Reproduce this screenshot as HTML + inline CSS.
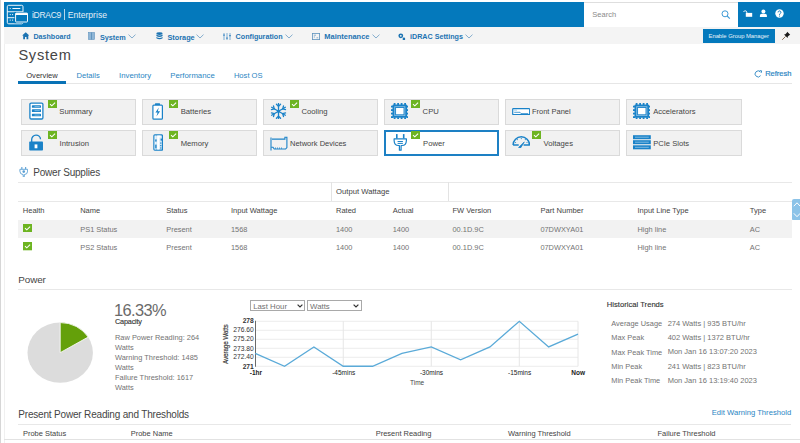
<!DOCTYPE html>
<html><head><meta charset="utf-8"><style>
html,body{margin:0;padding:0;background:#fff;width:800px;height:443px;overflow:hidden;position:relative}
body{font-family:"Liberation Sans", sans-serif}
.t{position:absolute;white-space:nowrap;line-height:1}
.r{position:absolute;box-sizing:border-box}
</style></head><body>
<div class="r" style="left:0px;top:0px;width:1px;height:443px;background:#d6d6d6"></div>
<div class="r" style="left:4px;top:44px;width:1px;height:400px;background:#f0f0f0"></div>
<div class="r" style="left:4px;top:1.6px;width:796px;height:25.1px;background:#0479bc"></div>
<svg class="r" style="left:4px;top:2px" width="28" height="24" viewBox="0 0 28 24">
<g fill="none" stroke="#fff" stroke-width="0.95">
<rect x="3.3" y="3.3" width="15.7" height="18.5" rx="1.4"/>
<path d="M3.3 9.75 H19 M3.3 15.7 H19 M8.4 6.5 H16.3"/>
</g>
<g fill="#fff"><circle cx="6.2" cy="6.5" r="0.6"/><circle cx="6.2" cy="12.6" r="0.6"/><circle cx="8.6" cy="12.6" r="0.6"/><circle cx="6.2" cy="18.1" r="0.6"/><circle cx="8.6" cy="18.1" r="0.6"/></g>
<rect x="10.4" y="9.9" width="14.3" height="11.3" fill="#0479bc"/>
<rect x="11.6" y="11.1" width="11.9" height="8.9" rx="0.6" fill="none" stroke="#fff" stroke-width="0.95"/>
<rect x="11.6" y="11.1" width="11.9" height="1.9" fill="#fff"/>
</svg>
<div class="t" style="left:32.00px;top:10.80px;font-size:8.5px;color:#e4eff7;letter-spacing:-0.28px;">iDRAC9</div>
<div class="r" style="left:64.3px;top:9px;width:0.8px;height:11px;background:rgba(255,255,255,0.7)"></div>
<div class="t" style="left:67.80px;top:10.72px;font-size:8.6px;color:#e4eff7;">Enterprise</div>
<div class="r" style="left:584px;top:2px;width:153.5px;height:24.7px;background:#fff"></div>
<div class="r" style="left:584px;top:1.6px;width:153.5px;height:1px;background:#dedede"></div>
<div class="t" style="left:592.30px;top:11.35px;font-size:7.5px;color:#8a8a8a;">Search</div>
<svg class="r" style="left:721px;top:10px" width="10" height="9" viewBox="0 0 10 9"><circle cx="4" cy="3.8" r="3" fill="none" stroke="#3d9ad6" stroke-width="1"/><path d="M6.2 6 L8.8 8.6" stroke="#3d9ad6" stroke-width="1.1"/></svg>
<svg class="r" style="left:742px;top:9px" width="12" height="10" viewBox="0 0 12 10"><path d="M1.6 2.8 a1.7 1.7 0 0 1 3.2 0.4 V4.4" fill="none" stroke="#fff" stroke-width="1"/><rect x="3.8" y="3.9" width="6.4" height="3.9" fill="#fff"/></svg>
<svg class="r" style="left:759.3px;top:9px" width="9" height="9" viewBox="0 0 9 9"><circle cx="4.4" cy="2.5" r="2" fill="#fff"/><path d="M0.9 8 V6.6 a1.9 1.9 0 0 1 1.9 -1.9 H6 a1.9 1.9 0 0 1 1.9 1.9 V8 Z" fill="#fff"/></svg>
<svg class="r" style="left:775.1px;top:9.2px" width="9" height="9" viewBox="0 0 9 9"><circle cx="4.5" cy="4.5" r="4.2" fill="#fff"/><path d="M3.1 3.4 a1.4 1.4 0 1 1 2.2 1.1 c-0.6 0.4 -0.8 0.6 -0.8 1.3" fill="none" stroke="#0a76bb" stroke-width="1"/><circle cx="4.5" cy="7" r="0.55" fill="#0a76bb"/></svg>
<div class="r" style="left:4px;top:26.8px;width:796px;height:17.6px;background:#f4f4f4"></div>
<svg class="r" style="left:21.5px;top:32.3px" width="7.5" height="7.3" viewBox="0 0 7.5 7.3"><path d="M3.75 0.2 L7.4 3.6 H6.3 V7.2 H4.5 V5 H3 V7.2 H1.2 V3.6 H0.1 Z" fill="#1c73b2"/></svg>
<div class="t" style="left:33.50px;top:33.69px;font-size:7.1px;color:#1c73b2;font-weight:700;">Dashboard</div>
<svg class="r" style="left:88px;top:32px" width="7" height="8" viewBox="0 0 7 8"><rect x="0.5" y="0.5" width="6" height="7" fill="#8fb6d6" stroke="#5f93bd" stroke-width="0.6"/><path d="M3.5 0.5 V7.5" stroke="#4f86b3" stroke-width="0.7"/></svg>
<div class="t" style="left:100.00px;top:33.57px;font-size:7.24px;color:#1c73b2;font-weight:700;">System</div>
<svg class="r" style="left:128px;top:34.2px" width="8" height="5" viewBox="0 0 8 5"><path d="M0.5 0.6 L4 4 L7.5 0.6" fill="none" stroke="#6a9cc4" stroke-width="0.8"/></svg>
<svg class="r" style="left:155.5px;top:32px" width="7" height="8" viewBox="0 0 7 8"><ellipse cx="3.5" cy="1.6" rx="3.1" ry="1.3" fill="#1c73b2"/><path d="M0.4 2.6 Q3.5 4.4 6.6 2.6 V4 Q3.5 5.8 0.4 4 Z M0.4 5 Q3.5 6.8 6.6 5 V6.3 Q3.5 8.1 0.4 6.3 Z" fill="#1c73b2"/></svg>
<div class="t" style="left:167.50px;top:33.52px;font-size:7.3px;color:#1c73b2;font-weight:700;">Storage</div>
<svg class="r" style="left:196px;top:34.2px" width="8" height="5" viewBox="0 0 8 5"><path d="M0.5 0.6 L4 4 L7.5 0.6" fill="none" stroke="#6a9cc4" stroke-width="0.8"/></svg>
<svg class="r" style="left:223px;top:32.5px" width="8" height="7.5" viewBox="0 0 8 7.5"><g stroke="#4a8fc6" stroke-width="0.7"><path d="M1 0 V7.5 M4 0 V7.5 M7 0 V7.5"/></g><g fill="#3a86c2"><rect x="0" y="1.6" width="2" height="1"/><rect x="3" y="4.6" width="2" height="1"/><rect x="6" y="2.2" width="2" height="1"/></g></svg>
<div class="t" style="left:235.60px;top:33.63px;font-size:7.17px;color:#1c73b2;font-weight:700;">Configuration</div>
<svg class="r" style="left:285px;top:34.2px" width="8" height="5" viewBox="0 0 8 5"><path d="M0.5 0.6 L4 4 L7.5 0.6" fill="none" stroke="#6a9cc4" stroke-width="0.8"/></svg>
<svg class="r" style="left:312px;top:32.5px" width="8" height="7" viewBox="0 0 8 7"><rect x="0.4" y="0.4" width="7.2" height="6.2" fill="none" stroke="#5f93bd" stroke-width="0.8"/><path d="M1.8 2.2 H4 M1.8 4 H3 M4.5 4.8 H6.2" stroke="#5f93bd" stroke-width="0.7"/></svg>
<div class="t" style="left:324.30px;top:33.39px;font-size:7.46px;color:#1c73b2;font-weight:700;">Maintenance</div>
<svg class="r" style="left:372px;top:34.2px" width="8" height="5" viewBox="0 0 8 5"><path d="M0.5 0.6 L4 4 L7.5 0.6" fill="none" stroke="#6a9cc4" stroke-width="0.8"/></svg>
<svg class="r" style="left:398px;top:32.5px" width="7.5" height="7.5" viewBox="0 0 7.5 7.5"><circle cx="2.8" cy="2.8" r="2.4" fill="#1c73b2"/><circle cx="2.8" cy="2.8" r="0.9" fill="#f4f4f4"/><circle cx="5.9" cy="5.9" r="1.3" fill="#1c73b2"/></svg>
<div class="t" style="left:410.00px;top:33.63px;font-size:7.17px;color:#1c73b2;font-weight:700;">iDRAC Settings</div>
<svg class="r" style="left:465px;top:34.2px" width="8" height="5" viewBox="0 0 8 5"><path d="M0.5 0.6 L4 4 L7.5 0.6" fill="none" stroke="#6a9cc4" stroke-width="0.8"/></svg>
<div class="r" style="left:703px;top:29.4px;width:72px;height:13.3px;background:#0479bc"></div>
<div class="t" style="left:708.50px;top:34.11px;font-size:5.9px;color:#e8f2f9;letter-spacing:-0.04px;">Enable Group Manager</div>
<svg class="r" style="left:781px;top:31px" width="10" height="10" viewBox="0 0 10 10"><path d="M6.2 0.8 L9.2 3.8 L8.3 4.2 L6.8 5.6 L6.6 7 L3 3.4 L4.4 3.2 L5.8 1.7 Z" fill="#1a1a1a"/><path d="M4.6 5.4 L1.2 8.8" stroke="#6b4a2a" stroke-width="0.8"/></svg>
<div class="t" style="left:18.40px;top:47.94px;font-size:14.6px;color:#454545;letter-spacing:0.75px;">System</div>
<div class="t" style="left:26.25px;top:72.10px;font-size:7.56px;color:#333;">Overview</div>
<div class="t" style="left:76.50px;top:72.07px;font-size:7.6px;color:#2b86c3;">Details</div>
<div class="t" style="left:119.10px;top:71.91px;font-size:7.78px;color:#2b86c3;">Inventory</div>
<div class="t" style="left:170.20px;top:71.91px;font-size:7.79px;color:#2b86c3;">Performance</div>
<div class="t" style="left:233.90px;top:72.07px;font-size:7.6px;color:#2b86c3;">Host OS</div>
<div class="r" style="left:18px;top:83px;width:774px;height:1px;background:#e6e6e6"></div>
<div class="r" style="left:18px;top:80.9px;width:48px;height:3.1px;background:#0872b6"></div>
<svg class="r" style="left:754px;top:70px" width="9" height="8" viewBox="0 0 9 8"><path d="M6.6 5.6 A3 3 0 1 1 6.4 2" fill="none" stroke="#2b86c3" stroke-width="0.9"/><path d="M5.6 0.6 L7.6 0.8 L7.3 2.8" fill="none" stroke="#2b86c3" stroke-width="0.9"/></svg>
<div class="t" style="left:765.20px;top:70.15px;font-size:7.5px;color:#2b86c3;-webkit-text-stroke:0.2px #2b86c3;">Refresh</div>
<div class="r" style="left:21.2px;top:99px;width:115.2px;height:25.6px;background:#f1f1f1;border:1px solid #dadada"></div>
<div class="t" style="left:59.30px;top:108.23px;font-size:7.76px;color:#454545;">Summary</div>
<svg class="r" style="left:48.0px;top:99.7px" width="9" height="8.3" viewBox="0 0 9 8.3"><rect width="9" height="8.3" fill="#6db421"/><path d="M2 4.2 L3.8 5.8 L7.1 2.7" fill="none" stroke="#fff" stroke-width="1.05"/></svg>
<div class="r" style="left:142.1px;top:99px;width:115.2px;height:25.6px;background:#f1f1f1;border:1px solid #dadada"></div>
<div class="t" style="left:180.70px;top:108.28px;font-size:7.7px;color:#454545;">Batteries</div>
<svg class="r" style="left:168.9px;top:99.7px" width="9" height="8.3" viewBox="0 0 9 8.3"><rect width="9" height="8.3" fill="#6db421"/><path d="M2 4.2 L3.8 5.8 L7.1 2.7" fill="none" stroke="#fff" stroke-width="1.05"/></svg>
<div class="r" style="left:263.2px;top:99px;width:115.2px;height:25.6px;background:#f1f1f1;border:1px solid #dadada"></div>
<div class="t" style="left:301.40px;top:108.28px;font-size:7.7px;color:#454545;">Cooling</div>
<svg class="r" style="left:290.0px;top:99.7px" width="9" height="8.3" viewBox="0 0 9 8.3"><rect width="9" height="8.3" fill="#6db421"/><path d="M2 4.2 L3.8 5.8 L7.1 2.7" fill="none" stroke="#fff" stroke-width="1.05"/></svg>
<div class="r" style="left:384.1px;top:99px;width:115.2px;height:25.6px;background:#f1f1f1;border:1px solid #dadada"></div>
<div class="t" style="left:422.60px;top:108.28px;font-size:7.7px;color:#454545;">CPU</div>
<svg class="r" style="left:410.90000000000003px;top:99.7px" width="9" height="8.3" viewBox="0 0 9 8.3"><rect width="9" height="8.3" fill="#6db421"/><path d="M2 4.2 L3.8 5.8 L7.1 2.7" fill="none" stroke="#fff" stroke-width="1.05"/></svg>
<div class="r" style="left:505.2px;top:99px;width:115.2px;height:25.6px;background:#f1f1f1;border:1px solid #dadada"></div>
<div class="t" style="left:532.00px;top:108.48px;font-size:7.47px;color:#454545;">Front Panel</div>
<div class="r" style="left:626.4px;top:99px;width:115.2px;height:25.6px;background:#f1f1f1;border:1px solid #dadada"></div>
<div class="t" style="left:653.20px;top:108.36px;font-size:7.61px;color:#454545;">Accelerators</div>
<div class="r" style="left:21.2px;top:130.2px;width:115.2px;height:25.6px;background:#f1f1f1;border:1px solid #dadada"></div>
<div class="t" style="left:59.50px;top:139.68px;font-size:7.7px;color:#454545;">Intrusion</div>
<svg class="r" style="left:48.0px;top:130.89999999999998px" width="9" height="8.3" viewBox="0 0 9 8.3"><rect width="9" height="8.3" fill="#6db421"/><path d="M2 4.2 L3.8 5.8 L7.1 2.7" fill="none" stroke="#fff" stroke-width="1.05"/></svg>
<div class="r" style="left:142.1px;top:130.2px;width:115.2px;height:25.6px;background:#f1f1f1;border:1px solid #dadada"></div>
<div class="t" style="left:180.70px;top:139.68px;font-size:7.7px;color:#454545;">Memory</div>
<svg class="r" style="left:168.9px;top:130.89999999999998px" width="9" height="8.3" viewBox="0 0 9 8.3"><rect width="9" height="8.3" fill="#6db421"/><path d="M2 4.2 L3.8 5.8 L7.1 2.7" fill="none" stroke="#fff" stroke-width="1.05"/></svg>
<div class="r" style="left:263.2px;top:130.2px;width:115.2px;height:25.6px;background:#f1f1f1;border:1px solid #dadada"></div>
<div class="t" style="left:290.00px;top:139.63px;font-size:7.52px;color:#454545;">Network Devices</div>
<div class="r" style="left:383.90000000000003px;top:130.0px;width:115.60000000000001px;height:26.0px;background:#fff;border:2px solid #1d80c4"></div>
<div class="t" style="left:423.00px;top:139.68px;font-size:7.7px;color:#454545;">Power</div>
<svg class="r" style="left:410.90000000000003px;top:130.89999999999998px" width="9" height="8.3" viewBox="0 0 9 8.3"><rect width="9" height="8.3" fill="#6db421"/><path d="M2 4.2 L3.8 5.8 L7.1 2.7" fill="none" stroke="#fff" stroke-width="1.05"/></svg>
<div class="r" style="left:505.2px;top:130.2px;width:115.2px;height:25.6px;background:#f1f1f1;border:1px solid #dadada"></div>
<div class="t" style="left:543.50px;top:139.68px;font-size:7.7px;color:#454545;">Voltages</div>
<svg class="r" style="left:532.0px;top:130.89999999999998px" width="9" height="8.3" viewBox="0 0 9 8.3"><rect width="9" height="8.3" fill="#6db421"/><path d="M2 4.2 L3.8 5.8 L7.1 2.7" fill="none" stroke="#fff" stroke-width="1.05"/></svg>
<div class="r" style="left:626.4px;top:130.2px;width:115.2px;height:25.6px;background:#f1f1f1;border:1px solid #dadada"></div>
<div class="t" style="left:653.20px;top:139.57px;font-size:7.6px;color:#454545;">PCIe Slots</div>
<svg class="r" style="left:29px;top:102px" width="15" height="18" viewBox="0 0 15 18"><rect x="0.9" y="1.1" width="13" height="15.9" rx="1.2" fill="#fff" stroke="#1a82c8" stroke-width="1.3"/><g fill="#1a82c8"><rect x="2.9" y="3.3" width="9.1" height="2.5" rx="0.6"/><rect x="2.9" y="7.3" width="9.1" height="2.7" rx="0.6"/><rect x="2.9" y="11.8" width="9.1" height="2.5" rx="0.6"/></g><g stroke="#9fcbea" stroke-width="0.7"><path d="M5.5 4.55 H10.8 M5.5 8.65 H10.8 M5.5 13.05 H10.8"/></g></svg>
<svg class="r" style="left:152px;top:102.5px" width="11.5" height="17" viewBox="0 0 11.5 17"><rect x="3" y="0.3" width="5" height="2" rx="0.5" fill="#1a82c8"/><rect x="0.9" y="2.1" width="9.5" height="14" rx="0.9" fill="#fff" stroke="#1a82c8" stroke-width="1.2"/><path d="M6.8 4.6 L3.4 9.6 H5.6 L4.4 13.6 L8.1 8.2 H5.8 Z" fill="#1a82c8"/></svg>
<svg class="r" style="left:270px;top:102.5px" width="17" height="16.5" viewBox="-8.5 -8.25 17 16.5"><g stroke="#1a82c8" stroke-width="1.3" stroke-linecap="round" fill="none"><path d="M-0.00 7.90 L0.00 -7.90"/><path d="M0.00 -4.90 l-2.05 -2.05"/><path d="M0.00 -4.90 l2.05 -2.05"/><path d="M-0.00 4.90 l2.05 2.05"/><path d="M-0.00 4.90 l-2.05 2.05"/><path d="M-6.84 3.95 L6.84 -3.95"/><path d="M4.24 -2.45 l0.75 -2.80"/><path d="M4.24 -2.45 l2.80 0.75"/><path d="M-4.24 2.45 l-0.75 2.80"/><path d="M-4.24 2.45 l-2.80 -0.75"/><path d="M-6.84 -3.95 L6.84 3.95"/><path d="M4.24 2.45 l2.80 -0.75"/><path d="M4.24 2.45 l0.75 2.80"/><path d="M-4.24 -2.45 l-2.80 0.75"/><path d="M-4.24 -2.45 l-0.75 -2.80"/></g><circle r="1.5" fill="#1a82c8"/></svg>
<svg class="r" style="left:390.6px;top:102.8px" width="17.6" height="16.3" viewBox="0 0 17.6 16.3"><g fill="#1a82c8"><rect x="2.7" y="0" width="1.8" height="2" /><rect x="2.7" y="14.3" width="1.8" height="2"/><rect x="0" y="2.7" width="2" height="1.8"/><rect x="15.6" y="2.7" width="2" height="1.8"/><rect x="6.199999999999999" y="0" width="1.8" height="2" /><rect x="6.199999999999999" y="14.3" width="1.8" height="2"/><rect x="0" y="6.199999999999999" width="2" height="1.8"/><rect x="15.6" y="6.199999999999999" width="2" height="1.8"/><rect x="9.7" y="0" width="1.8" height="2" /><rect x="9.7" y="14.3" width="1.8" height="2"/><rect x="0" y="9.7" width="2" height="1.8"/><rect x="15.6" y="9.7" width="2" height="1.8"/><rect x="13.2" y="0" width="1.8" height="2" /><rect x="13.2" y="14.3" width="1.8" height="2"/><rect x="0" y="13.2" width="2" height="1.8"/><rect x="15.6" y="13.2" width="2" height="1.8"/><rect x="1.5" y="1.6" width="14.6" height="13.1" rx="1"/></g><rect x="3.3" y="3.3" width="11" height="9.7" fill="#8fc2e6"/><rect x="4.6" y="4.5" width="8.4" height="7.3" fill="#fff" stroke="#1a82c8" stroke-width="0.9"/></svg>
<svg class="r" style="left:632.8px;top:102.8px" width="17.6" height="16.3" viewBox="0 0 17.6 16.3"><g fill="#1a82c8"><rect x="2.7" y="0" width="1.8" height="2" /><rect x="2.7" y="14.3" width="1.8" height="2"/><rect x="0" y="2.7" width="2" height="1.8"/><rect x="15.6" y="2.7" width="2" height="1.8"/><rect x="6.199999999999999" y="0" width="1.8" height="2" /><rect x="6.199999999999999" y="14.3" width="1.8" height="2"/><rect x="0" y="6.199999999999999" width="2" height="1.8"/><rect x="15.6" y="6.199999999999999" width="2" height="1.8"/><rect x="9.7" y="0" width="1.8" height="2" /><rect x="9.7" y="14.3" width="1.8" height="2"/><rect x="0" y="9.7" width="2" height="1.8"/><rect x="15.6" y="9.7" width="2" height="1.8"/><rect x="13.2" y="0" width="1.8" height="2" /><rect x="13.2" y="14.3" width="1.8" height="2"/><rect x="0" y="13.2" width="2" height="1.8"/><rect x="15.6" y="13.2" width="2" height="1.8"/><rect x="1.5" y="1.6" width="14.6" height="13.1" rx="1"/></g><rect x="3.3" y="3.3" width="11" height="9.7" fill="#8fc2e6"/><rect x="4.6" y="4.5" width="8.4" height="7.3" fill="#fff" stroke="#1a82c8" stroke-width="0.9"/></svg>
<svg class="r" style="left:511.5px;top:107.5px" width="18.5" height="7.6" viewBox="0 0 18.5 7.6"><rect x="0.7" y="0.7" width="17" height="6" rx="0.6" fill="#fff" stroke="#1a82c8" stroke-width="1.2"/><path d="M2.2 4.3 H8 L9 5.6 H16.3" fill="none" stroke="#1a82c8" stroke-width="0.8"/><rect x="2" y="1.6" width="3" height="1" fill="#9fcbea"/></svg>
<svg class="r" style="left:29.4px;top:133.5px" width="14.2" height="17" viewBox="0 0 14.2 17"><path d="M2.7 8.2 V5.6 a4.4 4.4 0 0 1 8.8 -0.3" fill="none" stroke="#1a82c8" stroke-width="1.3"/><rect x="0.2" y="7.6" width="13.8" height="9" rx="0.8" fill="#1a82c8"/><rect x="5.6" y="10.4" width="2.8" height="3.9" fill="#fff"/></svg>
<svg class="r" style="left:152.6px;top:133.5px" width="10.4" height="17" viewBox="0 0 10.4 17"><rect x="0.9" y="0.9" width="8.6" height="15.3" rx="0.9" fill="#d2e8f7" stroke="#1a82c8" stroke-width="1.2"/><path d="M4.2 1.6 H7.6 V3.6 H6.4 V15.6 H4.2 Z" fill="#fff"/><rect x="1.6" y="1.6" width="1.2" height="14" fill="#fff" opacity="0.6"/><g fill="#1a82c8"><rect x="2.2" y="5.4" width="1.4" height="2.2"/><rect x="2.2" y="10.6" width="1.4" height="3.8"/><rect x="7.6" y="4.6" width="1.6" height="2"/><rect x="7.2" y="8.5" width="1.2" height="1.2"/><rect x="7.2" y="11" width="1.2" height="1.2"/><rect x="7.2" y="13.4" width="1.2" height="1.2"/></g></svg>
<svg class="r" style="left:269.5px;top:135.5px" width="18" height="15" viewBox="0 0 18 15"><g fill="none" stroke="#1a82c8" stroke-width="1.1"><path d="M1 1.5 V14.6"/><path d="M2 3.1 H14.9 V1.2 H16.9 V11.5 L15.6 13 H4.2 L3 11.2 H1.2"/></g><g fill="#1a82c8"><rect x="5" y="11.6" width="1" height="1"/><rect x="7" y="11.6" width="1" height="1"/><rect x="9" y="11.6" width="1" height="1"/><rect x="11" y="11.6" width="1" height="1"/></g></svg>
<svg class="r" style="left:393px;top:134.2px" width="14.5" height="17" viewBox="0 0 14.5 17"><g fill="#1a82c8"><rect x="3" y="0.1" width="1.6" height="4.6"/><rect x="9.9" y="0.1" width="1.6" height="4.6"/></g><path d="M1.1 4.8 H13.4 V6.4 Q13.2 11.5 9 11.5 H8.1 V16.2 H6.4 V11.5 H5.5 Q1.3 11.5 1.1 6.4 Z" fill="#fff" stroke="#1a82c8" stroke-width="1.2" stroke-linejoin="round"/><path d="M4.6 7.5 H9.9 M4.6 9.4 H9.9" stroke="#1a82c8" stroke-width="1"/></svg>
<svg class="r" style="left:511.5px;top:135.8px" width="18.6" height="12.2" viewBox="0 0 18.6 12.2"><path d="M1.1 9 A8.2 8.2 0 0 1 17.5 9 H11.6 M6.7 9 H1.1" fill="none" stroke="#1a82c8" stroke-width="1.5" stroke-linejoin="round"/><path d="M6.6 11.5 L12.3 6 L8.6 11.9 Z" fill="#1a82c8" stroke="#1a82c8" stroke-width="0.8"/><g fill="#1a82c8"><circle cx="3.6" cy="6.5" r="0.55"/><circle cx="5.3" cy="3.6" r="0.55"/><circle cx="9.3" cy="2.6" r="0.55"/><circle cx="13.3" cy="3.6" r="0.55"/><circle cx="15" cy="6.5" r="0.55"/></g></svg>
<svg class="r" style="left:632.9px;top:135px" width="17.8" height="14.5" viewBox="0 0 17.8 14.5"><rect x="0" y="0.2" width="17.8" height="4" fill="#1a82c8"/><path d="M2 2.2 H15.8" stroke="#a9d2ee" stroke-width="0.7"/><rect x="0" y="5.2" width="17.8" height="4" fill="#1a82c8"/><path d="M2 7.2 H15.8" stroke="#a9d2ee" stroke-width="0.7"/><rect x="0" y="10.3" width="17.8" height="4" fill="#1a82c8"/><path d="M2 12.3 H15.8" stroke="#a9d2ee" stroke-width="0.7"/></svg>
<svg class="r" style="left:18.5px;top:167.3px" width="9.5" height="10" viewBox="0 0 9.5 10"><g fill="#5a9fd4"><rect x="2.3" y="0" width="1.1" height="2.4"/><rect x="6.1" y="0" width="1.1" height="2.4"/></g><path d="M0.9 2.3 H8.6 V4.2 Q8.6 7.4 5.3 7.6 V9.8 H4.2 V7.6 Q0.9 7.4 0.9 4.2 Z" fill="#fff" stroke="#5a9fd4" stroke-width="0.9"/><circle cx="4.75" cy="4.6" r="1.3" fill="#5a9fd4"/></svg>
<div class="t" style="left:33.25px;top:167.94px;font-size:10px;color:#454545;letter-spacing:-0.2px;">Power Supplies</div>
<div class="r" style="left:18px;top:182px;width:774px;height:1px;background:#e8e8e8"></div>
<div class="r" style="left:331.3px;top:182px;width:1px;height:19px;background:#e3e3e3"></div>
<div class="r" style="left:448.4px;top:182px;width:1px;height:19px;background:#e3e3e3"></div>
<div class="t" style="left:336.00px;top:187.79px;font-size:7.69px;color:#444;">Output Wattage</div>
<div class="r" style="left:18px;top:200.5px;width:774px;height:1px;background:#e8e8e8"></div>
<div class="t" style="left:22.75px;top:206.90px;font-size:7.56px;color:#444;">Health</div>
<div class="t" style="left:80.20px;top:206.95px;font-size:7.5px;color:#444;">Name</div>
<div class="t" style="left:166.25px;top:206.95px;font-size:7.5px;color:#444;">Status</div>
<div class="t" style="left:231.00px;top:206.95px;font-size:7.5px;color:#444;">Input Wattage</div>
<div class="t" style="left:336.00px;top:206.95px;font-size:7.5px;color:#444;">Rated</div>
<div class="t" style="left:392.70px;top:206.95px;font-size:7.5px;color:#444;">Actual</div>
<div class="t" style="left:452.50px;top:206.95px;font-size:7.5px;color:#444;">FW Version</div>
<div class="t" style="left:540.40px;top:206.85px;font-size:7.62px;color:#444;">Part Number</div>
<div class="t" style="left:637.50px;top:206.96px;font-size:7.49px;color:#444;">Input Line Type</div>
<div class="t" style="left:749.80px;top:206.95px;font-size:7.5px;color:#444;">Type</div>
<div class="r" style="left:18px;top:219.6px;width:774px;height:18.5px;background:#f2f2f2"></div>
<svg class="r" style="left:22.5px;top:224.0px" width="9" height="8.3" viewBox="0 0 9 8.3"><rect width="9" height="8.3" fill="#6db421"/><path d="M2 4.2 L3.8 5.8 L7.1 2.7" fill="none" stroke="#fff" stroke-width="1.05"/></svg>
<div class="t" style="left:80.30px;top:225.54px;font-size:7.4px;color:#737373;">PS1 Status</div>
<div class="t" style="left:166.25px;top:225.54px;font-size:7.4px;color:#737373;">Present</div>
<div class="t" style="left:231.00px;top:225.54px;font-size:7.4px;color:#737373;">1568</div>
<div class="t" style="left:336.00px;top:225.54px;font-size:7.4px;color:#737373;">1400</div>
<div class="t" style="left:392.70px;top:225.54px;font-size:7.4px;color:#737373;">1400</div>
<div class="t" style="left:452.50px;top:225.54px;font-size:7.4px;color:#737373;">00.1D.9C</div>
<div class="t" style="left:540.40px;top:225.54px;font-size:7.4px;color:#737373;">07DWXYA01</div>
<div class="t" style="left:637.50px;top:225.54px;font-size:7.4px;color:#737373;">High line</div>
<div class="t" style="left:749.80px;top:225.54px;font-size:7.4px;color:#737373;">AC</div>
<svg class="r" style="left:22.5px;top:242.3px" width="9" height="8.3" viewBox="0 0 9 8.3"><rect width="9" height="8.3" fill="#6db421"/><path d="M2 4.2 L3.8 5.8 L7.1 2.7" fill="none" stroke="#fff" stroke-width="1.05"/></svg>
<div class="t" style="left:80.30px;top:243.84px;font-size:7.4px;color:#737373;">PS2 Status</div>
<div class="t" style="left:166.25px;top:243.84px;font-size:7.4px;color:#737373;">Present</div>
<div class="t" style="left:231.00px;top:243.84px;font-size:7.4px;color:#737373;">1568</div>
<div class="t" style="left:336.00px;top:243.84px;font-size:7.4px;color:#737373;">1400</div>
<div class="t" style="left:392.70px;top:243.84px;font-size:7.4px;color:#737373;">1400</div>
<div class="t" style="left:452.50px;top:243.84px;font-size:7.4px;color:#737373;">00.1D.9C</div>
<div class="t" style="left:540.40px;top:243.84px;font-size:7.4px;color:#737373;">07DWXYA01</div>
<div class="t" style="left:637.50px;top:243.84px;font-size:7.4px;color:#737373;">High line</div>
<div class="t" style="left:749.80px;top:243.84px;font-size:7.4px;color:#737373;">AC</div>
<svg class="r" style="left:791.5px;top:198.5px" width="8.5" height="21.5" viewBox="0 0 8.5 21.5"><path d="M2 0 H8.5 V21.5 H2 a2 2 0 0 1 -2 -2 V2 a2 2 0 0 1 2 -2 Z" fill="#8cc3e8"/><path d="M1.8 7.2 L5 3.8 L8.2 7.2 M1.8 14.3 L5 17.7 L8.2 14.3" fill="none" stroke="#fff" stroke-width="1"/></svg>
<div class="t" style="left:18.30px;top:275.42px;font-size:9.9px;color:#454545;letter-spacing:-0.1px;">Power</div>
<div class="r" style="left:18px;top:289px;width:774px;height:1px;background:#e8e8e8"></div>
<svg class="r" style="left:0;top:0" width="200" height="443"><g transform="translate(60.2 352.65) scale(1.087 1) translate(-60.2 -352.65)"><circle cx="60.2" cy="352.65" r="30.1" fill="#dcdcdc"/><path d="M60.2 352.65 L60.2 322.54999999999995 A30.1 30.1 0 0 1 85.94 337.05 Z" fill="#64a00a" stroke="#fff" stroke-width="0.8"/></g></svg>
<div class="t" style="left:114.00px;top:301.92px;font-size:16.4px;color:#6a6a6a;letter-spacing:-0.6px;">16.33%</div>
<div class="t" style="left:115.00px;top:318.32px;font-size:7.3px;color:#333;letter-spacing:-0.2px;-webkit-text-stroke:0.12px #333;">Capacity</div>
<div class="t" style="left:115.00px;top:333.71px;font-size:7.43px;color:#737373;">Raw Power Reading: 264</div>
<div class="t" style="left:115.00px;top:343.81px;font-size:7.43px;color:#737373;">Watts</div>
<div class="t" style="left:115.00px;top:353.91px;font-size:7.43px;color:#737373;">Warning Threshold: 1485</div>
<div class="t" style="left:115.00px;top:364.01px;font-size:7.43px;color:#737373;">Watts</div>
<div class="t" style="left:115.00px;top:374.11px;font-size:7.43px;color:#737373;">Failure Threshold: 1617</div>
<div class="t" style="left:115.00px;top:384.21px;font-size:7.43px;color:#737373;">Watts</div>
<div class="r" style="left:250.1px;top:300px;width:55.3px;height:11.4px;background:#fff;border:1px solid #a9a9a9"></div>
<div class="t" style="left:253.20px;top:302.80px;font-size:7.8px;color:#707070;">Last Hour</div>
<svg class="r" style="left:296.9px;top:304px" width="6" height="4" viewBox="0 0 6 4"><path d="M0.6 0.6 L3 3 L5.4 0.6" fill="none" stroke="#333" stroke-width="1.2"/></svg>
<div class="r" style="left:307px;top:300px;width:54.8px;height:11.4px;background:#fff;border:1px solid #a9a9a9"></div>
<div class="t" style="left:310.10px;top:302.80px;font-size:7.8px;color:#707070;">Watts</div>
<svg class="r" style="left:353.3px;top:304px" width="6" height="4" viewBox="0 0 6 4"><path d="M0.6 0.6 L3 3 L5.4 0.6" fill="none" stroke="#333" stroke-width="1.2"/></svg>
<svg class="r" style="left:0;top:0" width="800" height="443"><path d="M255.2 321.25 H578" stroke="#ececec" stroke-width="1"/><path d="M255.2 330.25 H578" stroke="#ececec" stroke-width="1"/><path d="M255.2 339.25 H578" stroke="#ececec" stroke-width="1"/><path d="M255.2 348.25 H578" stroke="#ececec" stroke-width="1"/><path d="M255.2 357.25 H578" stroke="#ececec" stroke-width="1"/><path d="M255.2 366.25 H578" stroke="#ececec" stroke-width="1"/><path d="M343.24 321.25 V366.25" stroke="#e6e6e6" stroke-width="1"/><path d="M431.27 321.25 V366.25" stroke="#e6e6e6" stroke-width="1"/><path d="M519.31 321.25 V366.25" stroke="#e6e6e6" stroke-width="1"/><path d="M578.00 321.25 V366.25" stroke="#e6e6e6" stroke-width="1"/><path d="M255.5 320.75 V366.75" stroke="#6a6a6a" stroke-width="1"/><polyline points="255.20,353.39 284.55,366.25 313.89,346.96 343.24,366.25 372.58,366.25 401.93,353.39 431.27,346.96 460.62,359.82 489.96,346.96 519.31,321.25 548.65,346.96 578.00,334.11" fill="none" stroke="#5aaad8" stroke-width="1.3"/></svg>
<div class="t" style="right:546.2px;top:318.33px;font-size:6.7px;color:#333;font-weight:700;">278</div>
<div class="t" style="right:546.2px;top:327.13px;font-size:6.7px;color:#333;">276.60</div>
<div class="t" style="right:546.2px;top:336.43px;font-size:6.7px;color:#333;">275.20</div>
<div class="t" style="right:546.2px;top:345.53px;font-size:6.7px;color:#333;">273.80</div>
<div class="t" style="right:546.2px;top:354.33px;font-size:6.7px;color:#333;">272.40</div>
<div class="t" style="right:546.2px;top:363.83px;font-size:6.7px;color:#333;font-weight:700;">271</div>
<div class="t" style="left:201px;top:341.2px;width:50px;text-align:center;font-size:6.3px;letter-spacing:-0.1px;color:#333;-webkit-text-stroke:0.15px #333;transform:rotate(-90deg)">Average Watts</div>
<div class="t" style="left:225.90px;width:60px;text-align:center;top:369.90px;font-size:6.5px;color:#222;font-weight:700;">-1hr</div>
<div class="t" style="left:313.70px;width:60px;text-align:center;top:369.90px;font-size:6.5px;color:#222;">-45mins</div>
<div class="t" style="left:401.50px;width:60px;text-align:center;top:369.90px;font-size:6.5px;color:#222;">-30mins</div>
<div class="t" style="left:489.60px;width:60px;text-align:center;top:369.90px;font-size:6.5px;color:#222;">-15mins</div>
<div class="t" style="left:548.10px;width:60px;text-align:center;top:369.90px;font-size:6.5px;color:#222;font-weight:700;">Now</div>
<div class="t" style="left:410.00px;top:379.60px;font-size:6.5px;color:#444;">Time</div>
<div class="t" style="left:606.80px;top:300.92px;font-size:7.65px;color:#333;-webkit-text-stroke:0.12px #333;">Historical Trends</div>
<div class="t" style="left:611.30px;top:320.34px;font-size:7.4px;color:#737373;">Average Usage</div>
<div class="t" style="left:667.70px;top:320.25px;font-size:7.5px;color:#737373;">274 Watts | 935 BTU/hr</div>
<div class="t" style="left:611.30px;top:334.44px;font-size:7.4px;color:#737373;">Max Peak</div>
<div class="t" style="left:667.70px;top:334.35px;font-size:7.5px;color:#737373;">402 Watts | 1372 BTU/hr</div>
<div class="t" style="left:611.30px;top:348.54px;font-size:7.4px;color:#737373;">Max Peak Time</div>
<div class="t" style="left:667.70px;top:348.45px;font-size:7.5px;color:#737373;">Mon Jan 16 13:07:20 2023</div>
<div class="t" style="left:611.30px;top:362.64px;font-size:7.4px;color:#737373;">Min Peak</div>
<div class="t" style="left:667.70px;top:362.55px;font-size:7.5px;color:#737373;">241 Watts | 823 BTU/hr</div>
<div class="t" style="left:611.30px;top:376.74px;font-size:7.4px;color:#737373;">Min Peak Time</div>
<div class="t" style="left:667.70px;top:376.65px;font-size:7.5px;color:#737373;">Mon Jan 16 13:19:40 2023</div>
<div class="t" style="left:18.25px;top:409.84px;font-size:10px;color:#454545;letter-spacing:-0.18px;">Present Power Reading and Thresholds</div>
<div class="t" style="left:711.75px;top:409.32px;font-size:7.65px;color:#2b86c3;">Edit Warning Threshold</div>
<div class="r" style="left:18px;top:424.3px;width:773px;height:1px;background:#e8e8e8"></div>
<div class="t" style="left:23.00px;top:430.47px;font-size:7.48px;color:#444;">Probe Status</div>
<div class="t" style="left:130.75px;top:430.47px;font-size:7.48px;color:#444;">Probe Name</div>
<div class="t" style="left:375.75px;top:430.47px;font-size:7.48px;color:#444;">Present Reading</div>
<div class="t" style="left:508.00px;top:430.47px;font-size:7.48px;color:#444;">Warning Threshold</div>
<div class="t" style="left:657.50px;top:430.47px;font-size:7.48px;color:#444;">Failure Threshold</div>
<div class="r" style="left:4px;top:438.8px;width:796px;height:1px;background:#e2e2e2"></div>
</body></html>
